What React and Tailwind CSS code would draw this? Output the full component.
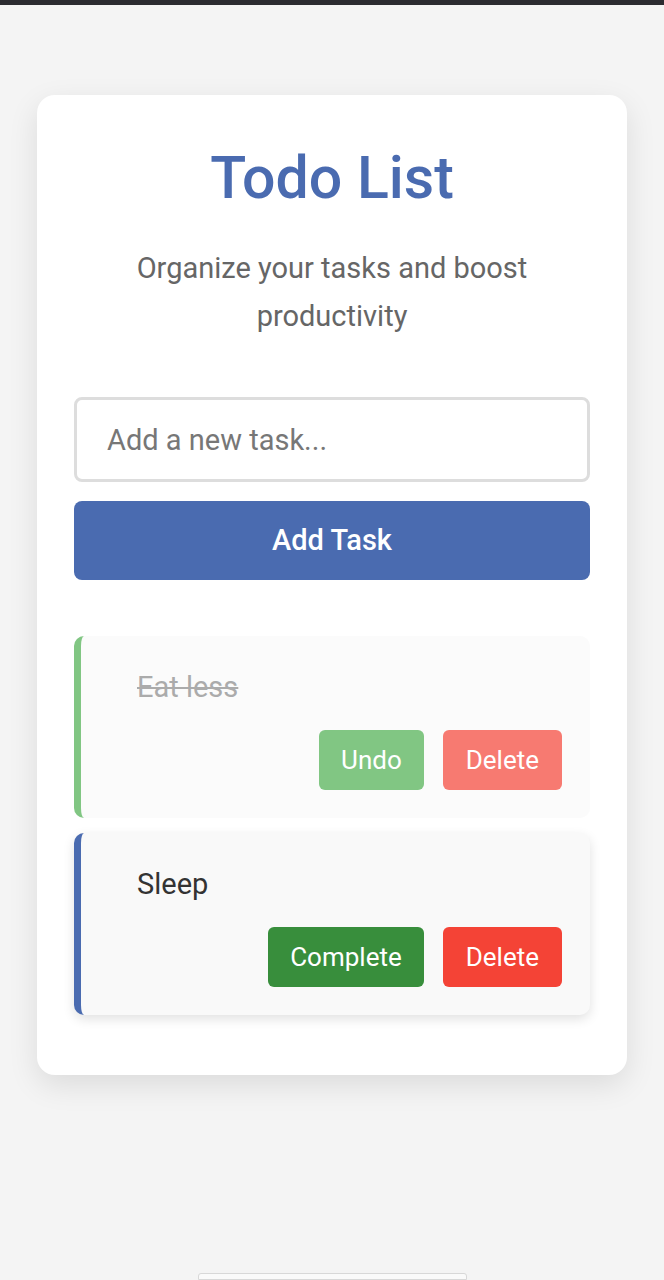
import { useState } from "react";

function TaskItem({ task, onToggle, onDelete }) {
  const done = task.completed;
  return (
    <div
      className={
        "rounded-[10px] border-l-[7px] p-[28px] " +
        (done
          ? "bg-[#fafafa] border-[#4caf50] opacity-70"
          : "bg-[#f9f9f9] border-[#4a6bb0] shadow-[0_4px_12px_rgba(0,0,0,0.12)]")
      }
    >
      <div
        className={
          "pl-[28px] pt-[8px] text-[29px] leading-[30px] " +
          (done ? "line-through text-[#888]" : "text-[#333]")
        }
      >
        {task.text}
      </div>
      <div className="flex justify-end gap-[19px] mt-[28px]">
        <button
          onClick={() => onToggle(task.id)}
          className={
            "h-[60px] px-[22px] rounded-[6px] text-white text-[26px] " +
            (done ? "bg-[#4caf50]" : "bg-[#388e3c]")
          }
        >
          {done ? "Undo" : "Complete"}
        </button>
        <button
          onClick={() => onDelete(task.id)}
          className="h-[60px] px-[23px] rounded-[6px] bg-[#f44336] text-white text-[26px]"
        >
          Delete
        </button>
      </div>
    </div>
  );
}

export default function App() {
  const [text, setText] = useState("");
  const [tasks, setTasks] = useState([
    { id: 1, text: "Eat less", completed: true },
    { id: 2, text: "Sleep", completed: false },
  ]);

  const addTask = () => {
    if (!text.trim()) return;
    setTasks([...tasks, { id: Date.now(), text: text.trim(), completed: false }]);
    setText("");
  };

  const toggleTask = (id) =>
    setTasks(tasks.map((t) => (t.id === id ? { ...t, completed: !t.completed } : t)));

  const deleteTask = (id) => setTasks(tasks.filter((t) => t.id !== id));

  return (
    <div className="relative min-h-[1280px] bg-[#f4f4f4] font-['Roboto',sans-serif]">
      {/* status strip */}
      <div className="h-[5px] bg-[#2b2b30]" />

      <div className="px-[37px] pt-[90px]">
        <div className="bg-white rounded-[18px] shadow-[0_10px_30px_rgba(0,0,0,0.1)] px-[37px] pt-[48px] pb-[60px]">
          <h1 className="text-center text-[59px] leading-[70px] font-medium text-[#4a6bb0]">
            Todo List
          </h1>
          <p className="mt-[31px] text-center text-[29px] leading-[48px] text-[#666] px-[40px]">
            Organize your tasks and boost productivity
          </p>

          <input
            type="text"
            value={text}
            onChange={(e) => setText(e.target.value)}
            placeholder="Add a new task..."
            className="mt-[57px] block w-full h-[85px] border-[3px] border-[#ddd] rounded-[8px] px-[30px] text-[29px] text-[#333] placeholder:text-[#777] outline-none"
          />
          <button
            onClick={addTask}
            className="mt-[19px] w-full h-[79px] rounded-[8px] bg-[#4a6bb0] text-white text-[29px] font-medium"
          >
            Add Task
          </button>

          <div className="mt-[56px] flex flex-col gap-[15px]">
            {tasks.map((task) => (
              <TaskItem
                key={task.id}
                task={task}
                onToggle={toggleTask}
                onDelete={deleteTask}
              />
            ))}
          </div>
        </div>
      </div>

      {/* home indicator */}
      <div className="absolute bottom-0 left-[198px] w-[269px] h-[7px] bg-[#fafafa] border border-[#d8d8d8] rounded-t-[3px]" />
    </div>
  );
}
